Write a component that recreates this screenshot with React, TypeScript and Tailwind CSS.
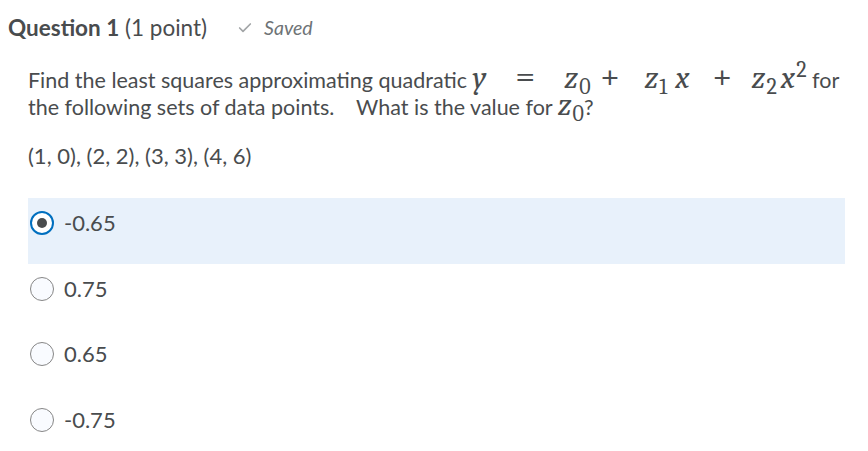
import { Check } from 'lucide-react';

const options = ['-0.65', '0.75', '0.65', '-0.75'];

function MathVar({ v, sub, sup }: { v: string; sub?: string; sup?: string }) {
  return (
    <span className="italic">
      {v}
      {sub && <sub className="not-italic text-[22px] ml-[1px]">{sub}</sub>}
      {sup && <sup className="not-italic text-[22px] ml-[1px]">{sup}</sup>}
    </span>
  );
}

function Op({ children, className }: { children: string; className: string }) {
  return (
    <span className={`inline-block text-center text-[36px] leading-[0] not-italic ${className}`}>
      {children}
    </span>
  );
}

function Radio({ checked }: { checked: boolean }) {
  return checked ? (
    <span className="w-[24px] h-[24px] shrink-0 rounded-full border-2 border-[#006fbf] bg-white flex items-center justify-center">
      <span className="w-[10px] h-[10px] rounded-full bg-[#494c4e]" />
    </span>
  ) : (
    <span className="w-[24px] h-[24px] shrink-0 rounded-full border border-[#868686] bg-[#f9fbff]" />
  );
}

export default function App() {
  const selected = 0;

  return (
    <div className="w-[868px] h-[451px] bg-white text-[#494c4e] font-['Lato',sans-serif] overflow-hidden">
      {/* Header */}
      <div className="flex items-center pt-[11px] pl-[8px] h-[45px]">
        <h2 className="text-[22.5px] leading-none">
          <span className="font-bold">Question 1</span> (1 point)
        </h2>
        <span className="flex items-center ml-[30px] text-[#6e7376]">
          <Check size={16} strokeWidth={2.5} className="text-[#a2a5a7]" />
          <span className="italic text-[19.5px] ml-[11px]">Saved</span>
        </span>
      </div>

      {/* Question body */}
      <div className="pl-[28px] pr-[23px]">
        <p className="text-[21.5px] leading-[27px] mt-[22px]">
          Find the least squares approximating quadratic{' '}
          <span className="font-serif text-[32px] leading-[0]">
            <MathVar v="y" />
            <Op className="w-[20px] ml-[29px] mr-[29px]">=</Op>
            <MathVar v="z" sub="0" />
            <Op className="w-[25px] ml-[7px] mr-[22px]">+</Op>
            <MathVar v="z" sub="1" />
            <span className="ml-[8px]">
              <MathVar v="x" />
            </span>
            <Op className="w-[25px] ml-[20px] mr-[17px]">+</Op>
            <MathVar v="z" sub="2" />
            <span className="ml-[4px]">
              <MathVar v="x" sup="2" />
            </span>
          </span>{' '}
          for the following sets of data points.&nbsp;&nbsp;&nbsp; What is the value for{' '}
          <span className="font-serif text-[32px] leading-[0]">
            <MathVar v="z" sub="0" />
          </span>
          ?
        </p>
        <p className="text-[22px] mt-[18px]">(1, 0), (2, 2), (3, 3), (4, 6)</p>

        <div className="mt-[26px] flex flex-col">
          {options.map((opt, i) => (
            <label
              key={opt}
              className={`flex items-start h-[65.5px] pt-[13px] pl-[2px] ${i === selected ? 'bg-[#e8f1fb]' : ''}`}
            >
              <Radio checked={i === selected} />
              <span className="text-[22px] leading-[24px] ml-[10px]">{opt}</span>
            </label>
          ))}
        </div>
      </div>
    </div>
  );
}
